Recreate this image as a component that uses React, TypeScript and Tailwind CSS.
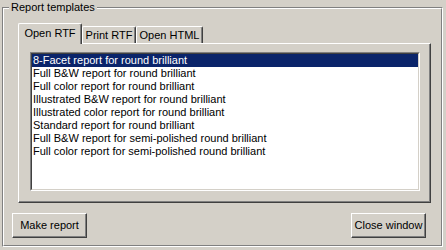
import { useState } from 'react';

const templates = [
  '8-Facet report for round brilliant',
  'Full B&W report for round brilliant',
  'Full color report for round brilliant',
  'Illustrated B&W report for round brilliant',
  'Illustrated color report for round brilliant',
  'Standard report for round brilliant',
  'Full B&W report for semi-polished round brilliant',
  'Full color report for semi-polished round brilliant',
];

const tabs = [
  { label: 'Open RTF', width: 'w-[64px]' },
  { label: 'Print RTF', width: 'w-[54px]' },
  { label: 'Open HTML', width: 'w-[67px]' },
];

function Button({ label }: { label: string }) {
  return (
    <button className="w-[75px] h-[25px] bg-[#d4d0c8] border border-t-white border-l-white border-r-[#404040] border-b-[#404040] shadow-[inset_-1px_-1px_0_#808080] text-black text-[11px] leading-none">
      {label}
    </button>
  );
}

export default function App() {
  const [activeTab, setActiveTab] = useState(0);
  const [selected, setSelected] = useState(0);

  return (
    <div
      className="w-[446px] h-[250px] bg-[#d4d0c8] pt-[7px] pl-[2px] pr-[3px] pb-[3px] text-[11px] text-black overflow-hidden"
      style={{ fontFamily: '"Liberation Sans", Arial, sans-serif' }}
    >
      {/* Group box with etched border */}
      <div className="relative h-full border border-t-[#808080] border-l-[#808080] border-r-white border-b-white">
        <span className="absolute left-[6px] top-[-7px] px-[2px] bg-[#d4d0c8] leading-[13px]">
          Report templates
        </span>
        <div className="h-full flex flex-col border border-t-white border-l-white border-r-[#808080] border-b-[#808080] pt-[14px] pl-[8px] pr-[10px]">
          {/* Tab control */}
          <div className="ml-[6px] flex flex-col">
            <div className="flex items-end h-[20px]">
              {tabs.map((tab, i) => {
                const active = i === activeTab;
                return (
                  <div
                    key={tab.label}
                    onClick={() => setActiveTab(i)}
                    className={`${tab.width} flex items-center justify-center bg-[#d4d0c8] border-t border-l border-r border-t-white border-l-white border-r-[#404040] rounded-tl-[2px] rounded-tr-[2px] shadow-[inset_-1px_0_0_#808080] cursor-default ${
                      active ? 'h-[21px] -mb-[1px] relative z-10 pb-[2px]' : 'h-[17px]'
                    }`}
                  >
                    {tab.label}
                  </div>
                );
              })}
            </div>
            <div className="h-[160px] border border-t-white border-l-white border-r-[#404040] border-b-[#404040] shadow-[inset_-1px_-1px_0_#808080] pt-[8px] pl-[11px] pr-[10px] pb-[11px]">
              {/* Listbox */}
              <div className="h-full border border-t-[#808080] border-l-[#808080] border-r-white border-b-white">
                <div className="h-full bg-white border border-t-[#404040] border-l-[#404040] border-r-[#d4d0c8] border-b-[#d4d0c8]">
                  {templates.map((t, i) => (
                    <div
                      key={t}
                      onClick={() => setSelected(i)}
                      className={`h-[13px] leading-[13px] pl-[1px] whitespace-nowrap ${
                        i === selected ? 'bg-[#0a246a] text-white' : 'text-black'
                      }`}
                    >
                      {t}
                    </div>
                  ))}
                </div>
              </div>
            </div>
          </div>

          {/* Buttons */}
          <div className="mt-[10px] flex justify-between pr-[5px]">
            <Button label="Make report" />
            <Button label="Close window" />
          </div>
        </div>
      </div>
    </div>
  );
}
